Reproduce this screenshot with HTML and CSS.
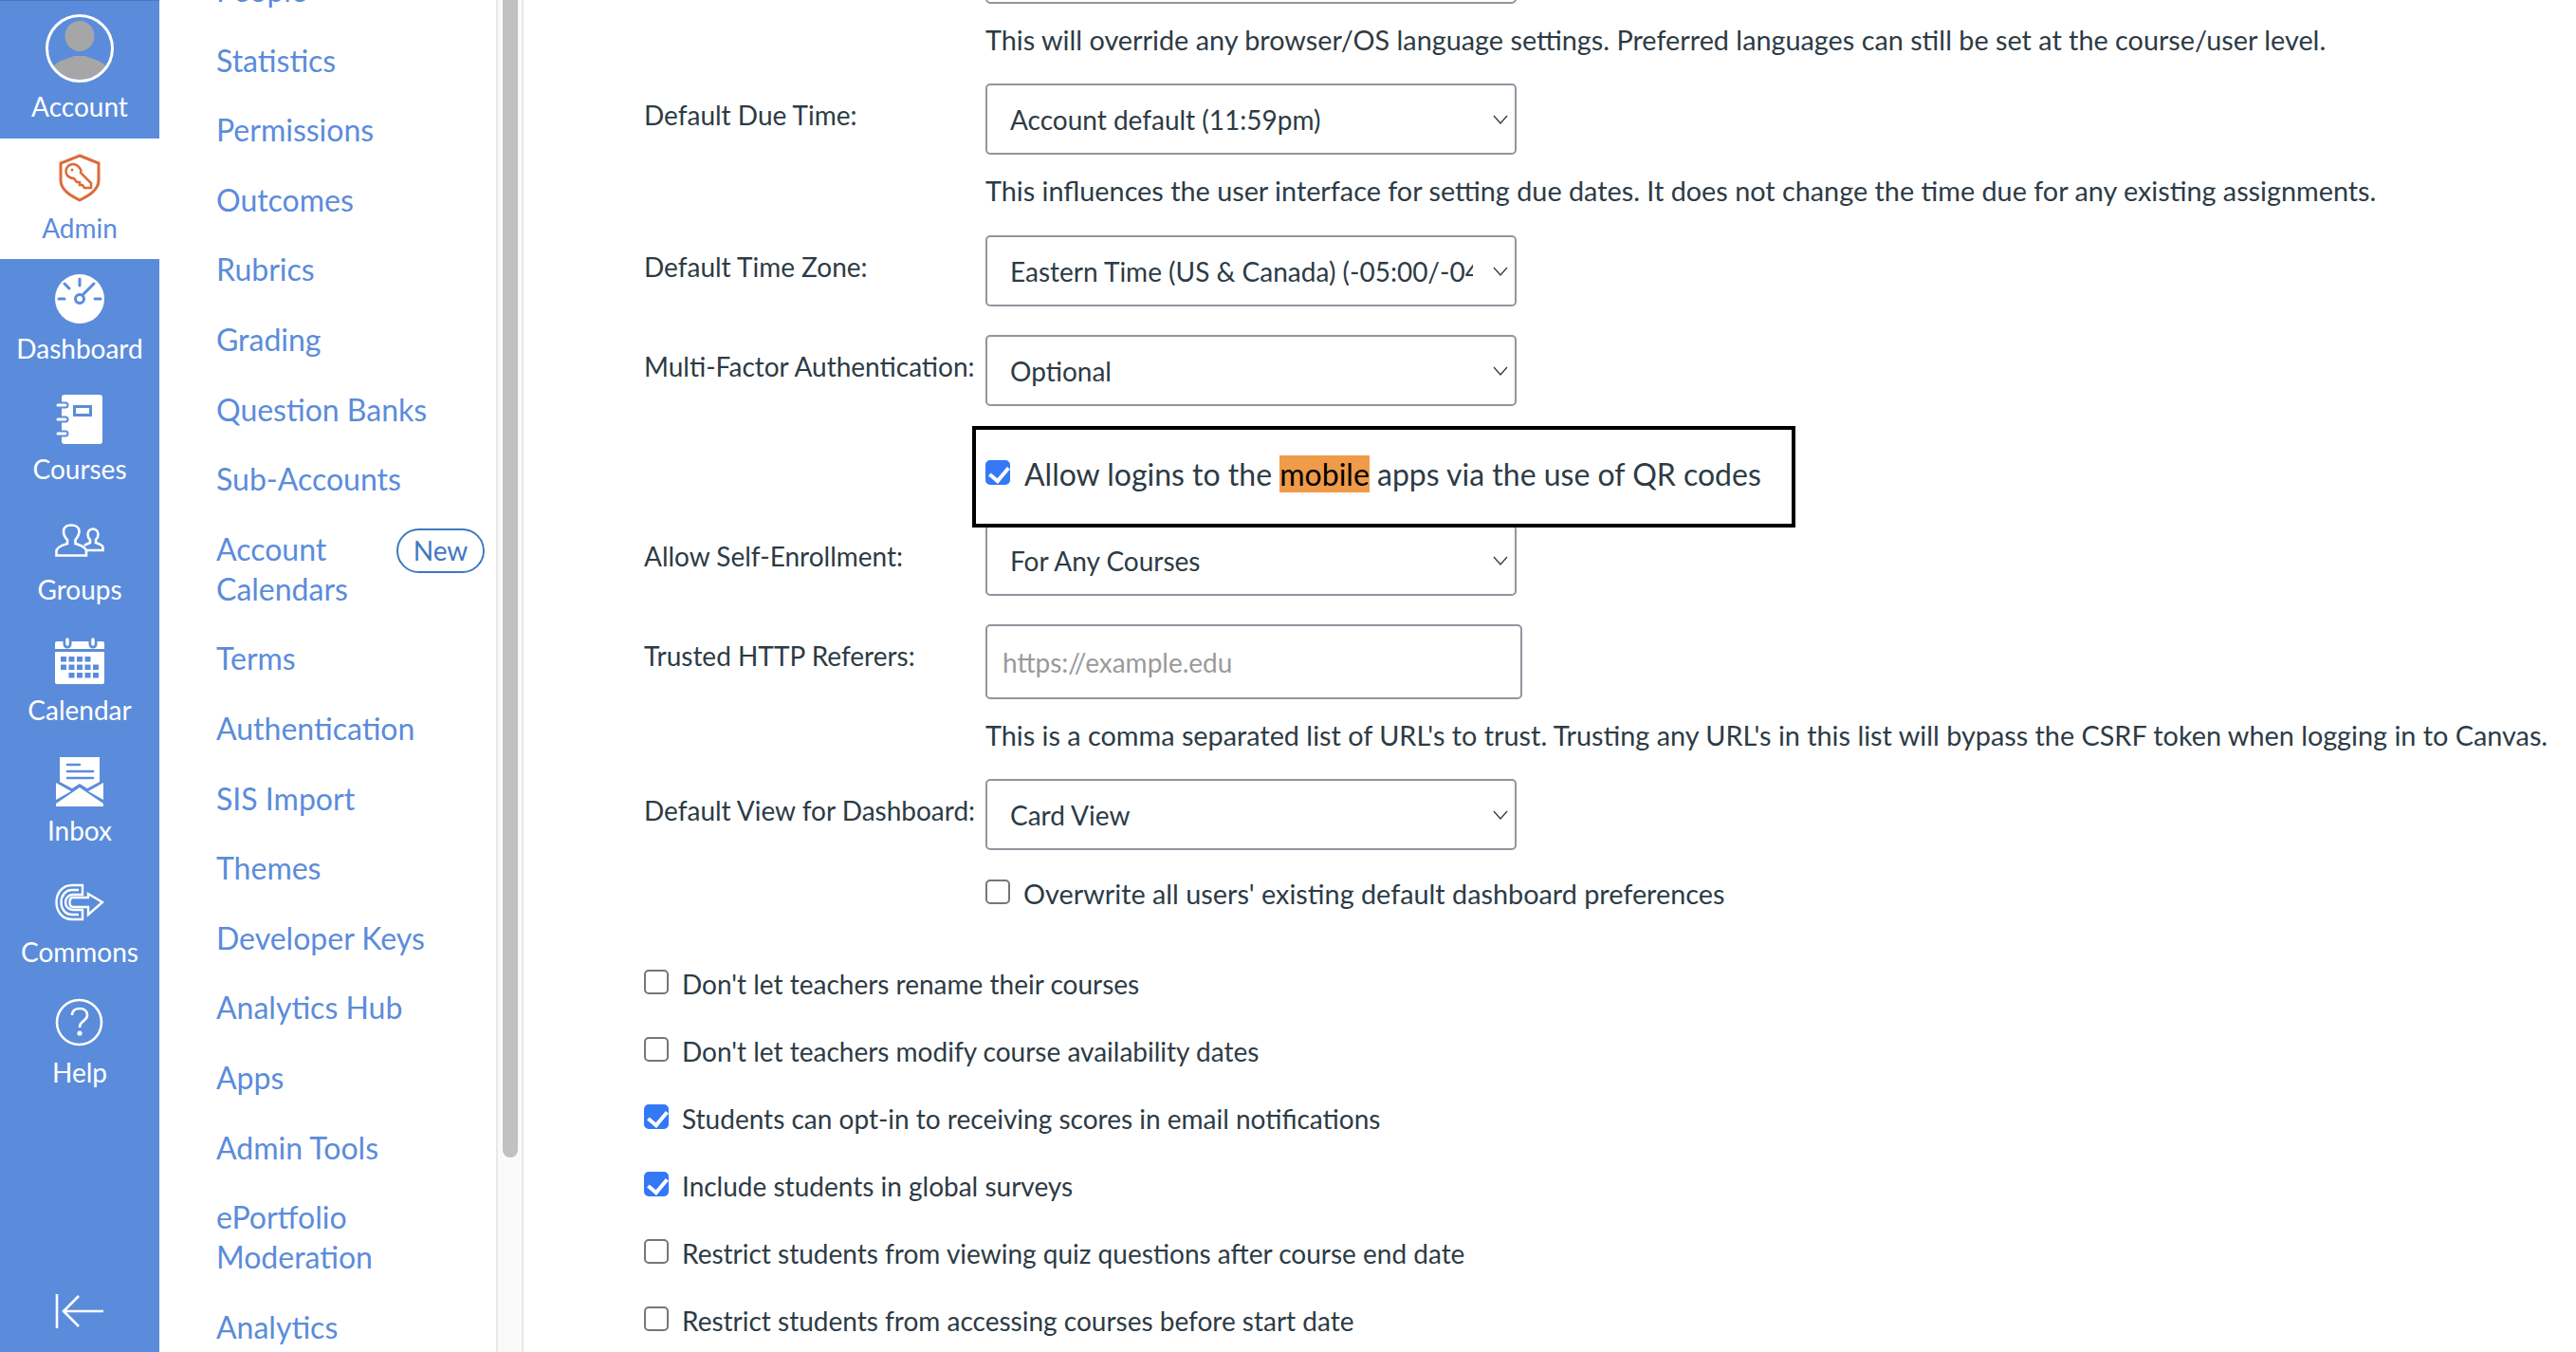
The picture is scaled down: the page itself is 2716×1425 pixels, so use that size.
FILE: index.html
```html
<!DOCTYPE html>
<html lang="en">
<head>
  <meta charset="UTF-8">
  <title>Account Settings</title>
  <link rel="stylesheet" href="styles.css">
</head>
<body>
  <nav class="global-nav">
    <a class="nav-item nav-account">
      <svg class="avatar" viewBox="48 15 72 72" width="72" height="72">
        <defs><clipPath id="avatar-clip"><circle cx="84" cy="51" r="33"/></clipPath></defs>
        <g clip-path="url(#avatar-clip)" fill="#a6a6a6">
          <ellipse cx="84" cy="38" rx="15.5" ry="16"/>
          <path d="M56 90 V70 C62 63 72 62 78 59 H90 C96 62 106 63 112 70 V90 Z"/>
        </g>
        <circle cx="84" cy="51" r="34.5" fill="none" stroke="#fff" stroke-width="3"/>
      </svg>
      <span>Account</span>
    </a>
    <a class="nav-item nav-active">
      <span class="nav-icon">
        <svg viewBox="62 162 44 52" width="44" height="52" fill="none" stroke="#dd6a3c" stroke-width="3">
          <path d="M84 164 L104 172 V190 C104 200 94 206 84 211 C74 206 64 200 64 190 V172 Z"/>
          <path d="M71 176 C74 172 80 172 83 176 C85 178 86 180 85 182 L96 193 V198 H89 L87 195 H84 V192 H81 L78 188 C75 188 73 187 71 185 C69 182 69 179 71 176 Z" stroke-width="2.5"/>
          <circle cx="76" cy="179" r="1.5" fill="#dd6a3c" stroke="none"/>
        </svg>
      </span>
      <span>Admin</span>
    </a>
    <a class="nav-item">
      <span class="nav-icon">
        <svg viewBox="58 289 52 52" width="52" height="52">
          <circle cx="84" cy="315" r="26" fill="#fff"/>
          <g fill="none" stroke="#5b8cdb" stroke-width="3" stroke-linecap="round">
            <circle cx="84" cy="315" r="4.5"/>
            <path d="M87 311 L99 299 M62 315 H68 M100 315 H106 M84 294 V301 M68 299 L73 304"/>
          </g>
        </svg>
      </span>
      <span>Dashboard</span>
    </a>
    <a class="nav-item">
      <span class="nav-icon">
        <svg viewBox="58 416 52 52" width="52" height="52">
          <rect x="65" y="416" width="43" height="52" rx="3" fill="#fff"/>
          <rect x="78.5" y="428.5" width="17" height="9" fill="none" stroke="#5b8cdb" stroke-width="3"/>
          <path d="M60 427 H69 M60 442 H69 M60 457 H69" stroke="#5b8cdb" stroke-width="7" stroke-linecap="round"/>
          <path d="M61 427 H69 M61 442 H69 M61 457 H69" stroke="#fff" stroke-width="3" stroke-linecap="round"/>
        </svg>
      </span>
      <span>Courses</span>
    </a>
    <a class="nav-item">
      <span class="nav-icon">
        <svg viewBox="58 552 52 35" width="52" height="35" fill="none" stroke="#fff" stroke-width="2.6">
          <path d="M59.5 585.5 V581 C59.5 576 68 574 71 573 V569 C68 566 67 563 67 560 C67 556 70 553.5 75 553.5 S83.5 556 83.5 560 C83.5 563 82 566 79.5 569 V573 C82 574 91 576 91 581 V585.5 Z"/>
          <path d="M91 580 H108.5 V577 C108.5 574 103 573 101 572 V569 C103 567 103.5 565 103.5 563 C103.5 560 101 557.5 98 557.5 S92.5 560 92.5 563 C92.5 565 93 567 95 569 V572 C93 573 90 574 89 575"/>
        </svg>
      </span>
      <span>Groups</span>
    </a>
    <a class="nav-item">
      <span class="nav-icon">
        <svg viewBox="58 672 52 49" width="52" height="49">
          <path d="M60 676 H108 A2 2 0 0 1 110 678 V684 H58 V678 A2 2 0 0 1 60 676 Z M58 687 H110 V719 A2 2 0 0 1 108 721 H60 A2 2 0 0 1 58 719 Z" fill="#fff"/>
          <path d="M71 674 V679 M98 674 V679" stroke="#5b8cdb" stroke-width="9" stroke-linecap="round"/>
          <path d="M71 674 V679 M98 674 V679" stroke="#fff" stroke-width="3.5" stroke-linecap="round"/>
          <path d="M64 692 h6 v5.5 h-6 z M72.500 692 h6 v5.500 h-6 z M81 692 h6 v5.500 h-6 z M89.500 692 h6 v5.500 h-6 z M64 700.500 h6 v5.500 h-6 z M72.500 700.500 h6 v5.500 h-6 z M81 700.500 h6 v5.500 h-6 z M89.500 700.500 h6 v5.500 h-6 z M98 700.500 h6 v5.500 h-6 z M72.500 709 h6 v5.500 h-6 z M81 709 h6 v5.500 h-6 z M89.500 709 h6 v5.500 h-6 z M98 709 h6 v5.500 h-6 z" fill="#5b8cdb"/>
        </svg>
      </span>
      <span>Calendar</span>
    </a>
    <a class="nav-item">
      <span class="nav-icon">
        <svg viewBox="58 797 52 52" width="52" height="52">
          <path d="M63 797 H105 V823 L92 830 L84 825 L76 830 L63 823 Z M59 824 L75 833 L59 842 Z M109 824 V842 L93 833 Z M84 829 L109 846 V849 H59 V846 Z" fill="#fff"/>
          <path d="M71 805 H84 M71 812 H98 M71 819 H98" stroke="#5b8cdb" stroke-width="2.6" stroke-linecap="round"/>
        </svg>
      </span>
      <span>Inbox</span>
    </a>
    <a class="nav-item">
      <span class="nav-icon">
        <svg viewBox="58 930 52 40" width="52" height="40" fill="none" stroke="#fff" stroke-width="2.4">
          <path d="M87 932 H76 C65 932 59.500 941 59.500 950 S65 968 76 968 H87 V958 H77 C73 958 69 955 69 950 S73 942 77 942 H87 Z"/>
          <path d="M83 937 H76 C69 937 64.500 943 64.500 950 S69 963 76 963 H83"/>
          <path d="M93 945 H77 C75 945 73.500 947 73.500 950 S75 955 77 955 H93 V963 L108 950 L93 941 Z"/>
        </svg>
      </span>
      <span>Commons</span>
    </a>
    <a class="nav-item">
      <span class="nav-icon">
        <svg viewBox="56 1050 54 54" width="54" height="54" fill="none" stroke="#fff" stroke-width="2.6">
          <ellipse cx="82.500" cy="1076.500" rx="23.500" ry="23.500"/>
          <path d="M75 1069 C75 1064 79 1062 83 1062 C88 1062 91 1065 91 1069 C91 1073 88 1074 86 1076 C84 1077.500 83 1079 83 1082"/>
          <circle cx="83" cy="1088" r="2.600" fill="#fff" stroke="none"/>
        </svg>
      </span>
      <span>Help</span>
    </a>
    <svg class="nav-collapse" viewBox="56 1362 56 38" width="56" height="38" fill="none" stroke="#fff" stroke-width="2.6">
      <path d="M60 1363 V1399 M109 1381 H67 M83 1365 L67 1381 L83 1397"/>
    </svg>
  </nav>

  <aside class="section-nav">
    <ul class="section-list">
      <li>People</li>
      <li>Statistics</li>
      <li>Permissions</li>
      <li>Outcomes</li>
      <li>Rubrics</li>
      <li>Grading</li>
      <li>Question Banks</li>
      <li>Sub-Accounts</li>
      <li class="has-badge"><span class="wrap-label">Account Calendars</span><span class="badge">New</span></li>
      <li>Terms</li>
      <li>Authentication</li>
      <li>SIS Import</li>
      <li>Themes</li>
      <li>Developer Keys</li>
      <li>Analytics Hub</li>
      <li>Apps</li>
      <li>Admin Tools</li>
      <li><span class="wrap-label">ePortfolio Moderation</span></li>
      <li>Analytics</li>
    </ul>
  </aside>

  <div class="scroll-track"><div class="scroll-thumb"></div></div>

  <main class="settings">
    <div class="row row-first">
      <label class="row-label">Default Language:</label>
      <div class="select-wrap">
        <select><option>Not set</option></select>
        <svg class="chevron" viewBox="0 0 16 10" width="16" height="10"><path d="M1 1 L8 9 L15 1" fill="none" stroke="#2d3b45" stroke-width="1.300"/></svg>
      </div>
    </div>
    <p class="hint">This will override any browser/OS language settings. Preferred languages can still be set at the course/user level.</p>

    <div class="row row-after-hint">
      <label class="row-label">Default Due Time:</label>
      <div class="select-wrap">
        <select><option>Account default (11:59pm)</option></select>
        <svg class="chevron" viewBox="0 0 16 10" width="16" height="10"><path d="M1 1 L8 9 L15 1" fill="none" stroke="#2d3b45" stroke-width="1.300"/></svg>
      </div>
    </div>
    <p class="hint">This influences the user interface for setting due dates. It does not change the time due for any existing assignments.</p>

    <div class="row row-time-zone">
      <label class="row-label">Default Time Zone:</label>
      <div class="select-wrap">
        <select><option>Eastern Time (US &amp; Canada) (-05:00/-04:00)</option></select>
        <svg class="chevron" viewBox="0 0 16 10" width="16" height="10"><path d="M1 1 L8 9 L15 1" fill="none" stroke="#2d3b45" stroke-width="1.300"/></svg>
      </div>
    </div>

    <div class="row row-gap">
      <label class="row-label">Multi-Factor Authentication:</label>
      <div class="select-wrap">
        <select><option>Optional</option></select>
        <svg class="chevron" viewBox="0 0 16 10" width="16" height="10"><path d="M1 1 L8 9 L15 1" fill="none" stroke="#2d3b45" stroke-width="1.300"/></svg>
      </div>
    </div>

    <div class="row row-qr">
      <div class="row-label"></div>
      <div class="qr-box">
        <input type="checkbox" checked>
        <span>Allow logins to the <mark>mobile</mark> apps via the use of QR codes</span>
      </div>
    </div>

    <div class="row row-under-qr">
      <label class="row-label">Allow Self-Enrollment:</label>
      <div class="select-wrap">
        <select><option>For Any Courses</option></select>
        <svg class="chevron" viewBox="0 0 16 10" width="16" height="10"><path d="M1 1 L8 9 L15 1" fill="none" stroke="#2d3b45" stroke-width="1.300"/></svg>
      </div>
    </div>

    <div class="row row-gap">
      <label class="row-label">Trusted HTTP Referers:</label>
      <input class="text-input" type="text" placeholder="https://example.edu">
    </div>
    <p class="hint">This is a comma separated list of URL's to trust. Trusting any URL's in this list will bypass the CSRF token when logging in to Canvas.</p>

    <div class="row row-after-hint">
      <label class="row-label">Default View for Dashboard:</label>
      <div class="select-wrap">
        <select><option>Card View</option></select>
        <svg class="chevron" viewBox="0 0 16 10" width="16" height="10"><path d="M1 1 L8 9 L15 1" fill="none" stroke="#2d3b45" stroke-width="1.300"/></svg>
      </div>
    </div>

    <label class="check check-indent"><input type="checkbox"><span>Overwrite all users' existing default dashboard preferences</span></label>

    <div class="check-list">
      <label class="check"><input type="checkbox"><span>Don't let teachers rename their courses</span></label>
      <label class="check"><input type="checkbox"><span>Don't let teachers modify course availability dates</span></label>
      <label class="check"><input type="checkbox" checked><span>Students can opt-in to receiving scores in email notifications</span></label>
      <label class="check"><input type="checkbox" checked><span>Include students in global surveys</span></label>
      <label class="check"><input type="checkbox"><span>Restrict students from viewing quiz questions after course end date</span></label>
      <label class="check"><input type="checkbox"><span>Restrict students from accessing courses before start date</span></label>
    </div>
  </main>
</body>
</html>
```

FILE: styles.css
```css
* {
  box-sizing: border-box;
  margin: 0;
  padding: 0;
}

html, body {
  height: 1425px;
  overflow: hidden;
}

body {
  display: flex;
  font-family: Lato, "Open Sans", sans-serif;
  font-size: 28px;
  line-height: 42px;
  color: #2d3b45;
  background-color: white;
}

/* global nav */
.global-nav {
  position: relative;
  flex: 0 0 168px;
  height: 1425px;
  display: flex;
  flex-direction: column;
  background-color: #5b8cdb;
  color: white;
  font-size: 28px;
}

.nav-item {
  height: 127.2px;
  display: flex;
  flex-direction: column;
  align-items: center;
  padding-top: 14px;
}

.nav-icon {
  height: 56px;
  margin-bottom: 2.5px;
  display: flex;
  align-items: center;
  justify-content: center;
}

.nav-item > span:last-child {
  line-height: 42px;
}

.nav-account {
  height: 146px;
  padding-top: 15px;
  border-top: 1px solid #4d76b8;
}

.avatar {
  margin-bottom: 4px;
  margin-top: -1px;
}

.nav-active {
  background-color: white;
  color: #5b8cdb;
}

.nav-collapse {
  position: absolute;
  left: 56px;
  top: 1363px;
}

/* section nav */
.section-nav {
  flex: 0 0 355px;
  height: 1425px;
  padding-left: 60px;
  overflow: hidden;
}

.section-list {
  list-style: none;
  margin-top: -31px;
  width: 283px;
  font-size: 32px;
  color: #5b8cdb;
}

.section-list li {
  line-height: 42px;
  margin-bottom: 31.6px;
}

.has-badge {
  display: flex;
  justify-content: space-between;
  align-items: flex-start;
}

.wrap-label {
  display: block;
  max-width: 180px;
}

.badge {
  width: 93px;
  height: 47px;
  border: 2px solid #3f78bf;
  border-radius: 24px;
  color: #3f78bf;
  font-size: 28px;
  line-height: 43px;
  text-align: center;
  margin-top: -1px;
}

.scroll-track {
  flex: 0 0 29px;
  height: 1425px;
  padding-left: 5px;
  padding-right: 4px;
  background-color: #fafafa;
  border-left: 2px solid #e8e8e8;
  border-right: 2px solid #e8e8e8;
}

.scroll-thumb {
  width: 16px;
  height: 1220px;
  background-color: #c1c1c1;
  border-radius: 0 0 8px 8px;
}

/* settings form */
.settings {
  flex: 1;
  min-width: 0;
  padding-left: 127px;
  margin-top: -71px;
}

.row {
  display: flex;
  align-items: flex-start;
}

.row-after-hint {
  margin-top: 25px;
}

.row-time-zone {
  margin-top: 26px;
}

.row-gap {
  margin-top: 30px;
}

.row-qr {
  position: relative;
  z-index: 1;
  margin-top: 21px;
}

.row-under-qr {
  margin-top: -3px;
}

.row-label {
  flex: 0 0 360px;
  padding-top: 12px;
  white-space: nowrap;
}

.select-wrap {
  position: relative;
  width: 560px;
  height: 75px;
}

.select-wrap select {
  display: block;
  width: 100%;
  height: 100%;
  appearance: none;
  border: 2px solid #8f969e;
  border-radius: 5px;
  background-color: white;
  padding: 0 44px 0 24px;
  font-family: inherit;
  font-size: 28px;
  color: #2d3b45;
}

.chevron {
  position: absolute;
  right: 9px;
  top: 33px;
  pointer-events: none;
}

.text-input {
  width: 566px;
  height: 79px;
  border: 2px solid #8f969e;
  border-radius: 5px;
  padding: 0 16px;
  font-family: inherit;
  font-size: 28px;
  color: #2d3b45;
}

.text-input::placeholder {
  color: #9a9a9a;
  opacity: 1;
}

.hint {
  margin-top: 17px;
  margin-left: 360px;
  font-size: 28.8px;
  white-space: nowrap;
}

input[type="checkbox"] {
  appearance: none;
  position: relative;
  width: 26px;
  height: 26px;
  flex: none;
  border: 2px solid #767676;
  border-radius: 5px;
  background-color: white;
}

input[type="checkbox"]:checked {
  border-color: #3478f6;
  background-color: #3478f6;
}

input[type="checkbox"]:checked::after {
  content: "";
  position: absolute;
  left: 6px;
  top: 1px;
  width: 9px;
  height: 16px;
  border-right: 4px solid white;
  border-bottom: 4px solid white;
  transform: rotate(40deg);
}

.qr-box {
  width: 868px;
  height: 107px;
  margin-left: -14px;
  padding-left: 10px;
  padding-bottom: 6px;
  border: 4px solid black;
  background-color: white;
  display: flex;
  align-items: center;
  gap: 15px;
  font-size: 32px;
  white-space: nowrap;
}

.qr-box input {
  margin-bottom: 3px;
}

mark {
  background-color: #f09b4a;
  color: black;
  display: inline-block;
  line-height: 39px;
}

.check {
  display: flex;
  align-items: center;
  gap: 14px;
  height: 42px;
}

.check input {
  margin-bottom: 5px;
}

.check-indent {
  margin-top: 25px;
  margin-left: 360px;
  font-size: 28.8px;
}

.check-list {
  margin-top: 53px;
  display: flex;
  flex-direction: column;
  gap: 29px;
}
```
